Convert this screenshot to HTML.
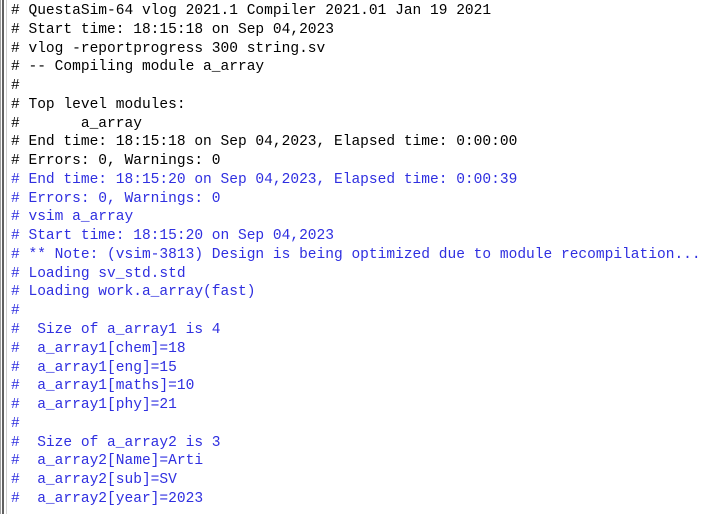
<!DOCTYPE html>
<html><head><meta charset="utf-8"><style>
html,body{margin:0;padding:0;background:#fff;width:710px;height:514px;overflow:hidden}
.b1{position:absolute;left:0;top:0;width:1px;height:514px;background:#a0a0a0}
.b2{position:absolute;left:2px;top:0;width:2px;height:514px;background:#606060}
.b3{position:absolute;left:6px;top:0;width:1px;height:514px;background:#d0d0d0}
pre{position:absolute;left:11px;top:2px;margin:0;font-family:"Liberation Mono","Courier New",monospace;font-size:14.55px;line-height:18.76px;color:#000}
.u{color:#2f2fe0}
</style></head><body>
<div class="b1"></div><div class="b2"></div><div class="b3"></div>
<pre># QuestaSim-64 vlog 2021.1 Compiler 2021.01 Jan 19 2021
# Start time: 18:15:18 on Sep 04,2023
# vlog -reportprogress 300 string.sv
# -- Compiling module a_array
#
# Top level modules:
#       a_array
# End time: 18:15:18 on Sep 04,2023, Elapsed time: 0:00:00
# Errors: 0, Warnings: 0
<span class="u"># End time: 18:15:20 on Sep 04,2023, Elapsed time: 0:00:39
# Errors: 0, Warnings: 0
# vsim a_array
# Start time: 18:15:20 on Sep 04,2023
# ** Note: (vsim-3813) Design is being optimized due to module recompilation...
# Loading sv_std.std
# Loading work.a_array(fast)
#
#  Size of a_array1 is 4
#  a_array1[chem]=18
#  a_array1[eng]=15
#  a_array1[maths]=10
#  a_array1[phy]=21
#
#  Size of a_array2 is 3
#  a_array2[Name]=Arti
#  a_array2[sub]=SV
#  a_array2[year]=2023</span></pre>
</body></html>
